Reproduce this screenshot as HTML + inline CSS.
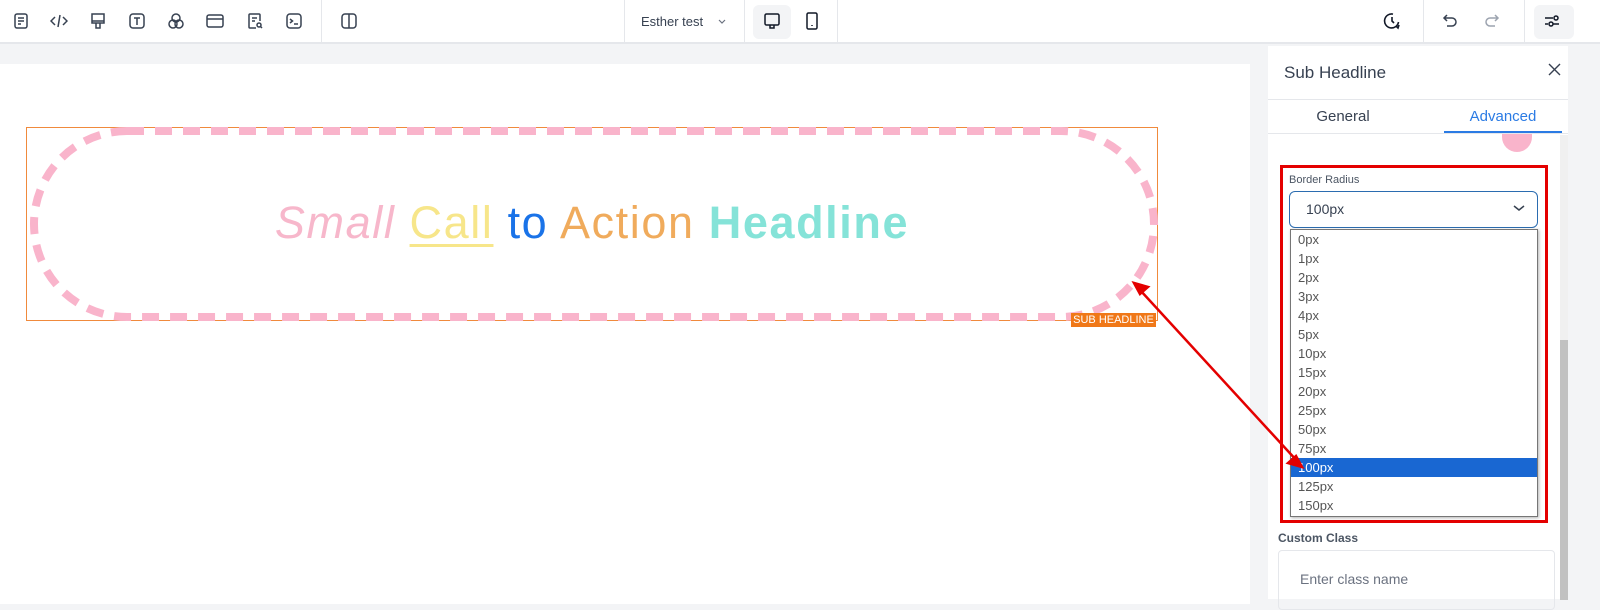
<!DOCTYPE html>
<html><head><meta charset="utf-8"><style>
*{box-sizing:border-box;margin:0;padding:0}
body{width:1600px;height:599px;overflow:hidden;background:#f3f4f6;font-family:"Liberation Sans",sans-serif;position:relative}
.top{position:absolute;left:0;top:0;width:1600px;height:44px;background:#fff;border-bottom:2px solid #e5e7eb}
.ic{position:absolute;top:12px}
.sep{position:absolute;top:0;width:1px;height:44px;background:#e5e7eb}
.page{position:absolute;left:0;top:64px;width:1250px;height:540px;background:#fff}
.panel{position:absolute;left:1268px;top:46px;width:300px;height:553px;background:#fff}
.sb{position:absolute;left:1560px;top:135px;width:8px;height:464px;background:#f0f0f0}
.sb div{position:absolute;left:0;top:205px;width:8px;height:260px;background:#c1c1c1}
.opt{height:19px;line-height:19px;padding-left:7px;font-size:13px;color:#555}
.opt.sel{background:#1967d2;color:#fff}
</style></head><body>
<div class="top">
<svg class="ic" style="left:12px" width="18" height="18" viewBox="0 0 18 18" fill="none" stroke="#374151" stroke-width="1.5"><rect x="3" y="2" width="12" height="14" rx="2"/><path d="M6 6h6M6 9h6M6 12h3"/></svg>
<svg class="ic" style="left:50px" width="18" height="18" viewBox="0 0 18 18" fill="none" stroke="#374151" stroke-width="1.5"><path d="M5 5L1 9l4 4M13 5l4 4-4 4M10 3L8 15"/></svg>
<svg class="ic" style="left:89px" width="18" height="18" viewBox="0 0 18 18" fill="none" stroke="#374151" stroke-width="1.5"><path d="M3 2h12v7H3zM3 9v2h12V9M7 11v5h4v-5"/></svg>
<svg class="ic" style="left:128px" width="18" height="18" viewBox="0 0 18 18" fill="none" stroke="#374151" stroke-width="1.5"><rect x="2" y="2" width="14" height="14" rx="3"/><path d="M6 6h6M9 6v7"/></svg>
<svg class="ic" style="left:167px" width="18" height="18" viewBox="0 0 18 18" fill="none" stroke="#374151" stroke-width="1.5"><circle cx="9" cy="6" r="4"/><circle cx="6" cy="12" r="4"/><circle cx="12" cy="12" r="4"/></svg>
<svg class="ic" style="left:206px" width="18" height="18" viewBox="0 0 18 18" fill="none" stroke="#374151" stroke-width="1.5"><rect x="1" y="3" width="16" height="12" rx="2"/><path d="M1 7h16"/></svg>
<svg class="ic" style="left:246px" width="18" height="18" viewBox="0 0 18 18" fill="none" stroke="#374151" stroke-width="1.5"><path d="M10 16H4a1 1 0 01-1-1V3a1 1 0 011-1h9a1 1 0 011 1v6M6 6h5M6 9h3"/><circle cx="13" cy="13" r="2"/><path d="M14.5 14.5L16 16"/></svg>
<svg class="ic" style="left:285px" width="18" height="18" viewBox="0 0 18 18" fill="none" stroke="#374151" stroke-width="1.5"><rect x="2" y="2" width="14" height="14" rx="3"/><path d="M5 7l2.5 2L5 11M9 12h4"/></svg>
<div class="sep" style="left:321px"></div>
<svg class="ic" style="left:340px" width="18" height="18" viewBox="0 0 18 18" fill="none" stroke="#374151" stroke-width="1.5"><rect x="2" y="2" width="14" height="14" rx="3"/><path d="M9 2v14"/></svg>
<div class="sep" style="left:624px"></div>
<div style="position:absolute;left:641px;top:14px;font-size:13px;color:#374151">Esther test</div>
<svg style="position:absolute;left:717px;top:18px" width="10" height="8" viewBox="0 0 10 8" fill="none" stroke="#6b7280" stroke-width="1.2"><path d="M2 2l3 3 3-3"/></svg>
<div class="sep" style="left:744px"></div>
<div style="position:absolute;left:753px;top:5px;width:38px;height:34px;background:#f3f4f6;border-radius:6px"></div>
<svg class="ic" style="left:763px" width="18" height="18" viewBox="0 0 18 18" fill="none" stroke="#111827" stroke-width="1.5"><rect x="2" y="2" width="14" height="11" rx="1.5"/><path d="M7 13v3h4v-3"/></svg>
<svg class="ic" style="left:803px" width="18" height="18" viewBox="0 0 18 18" fill="none" stroke="#111827" stroke-width="1.5"><rect x="4" y="1" width="10" height="16" rx="1.5"/><path d="M9 13v1"/></svg>
<div class="sep" style="left:837px"></div>
<svg class="ic" style="left:1383px" width="18" height="18" viewBox="0 0 18 18" fill="none" stroke="#111827" stroke-width="1.6"><path d="M15.5 10A7 7 0 1110 2.1"/><path d="M9 5v4l2 2M13 14l2 2 1-3"/></svg>
<div class="sep" style="left:1423px"></div>
<svg class="ic" style="left:1442px" width="18" height="18" viewBox="0 0 18 18" fill="none" stroke="#374151" stroke-width="1.5"><path d="M5 3L2 6l3 3M2 6h8a4 4 0 010 8H5"/></svg>
<svg class="ic" style="left:1482px" width="18" height="18" viewBox="0 0 18 18" fill="none" stroke="#9ca3af" stroke-width="1.5"><path d="M13 3l3 3-3 3M16 6H8a4 4 0 000 8h5"/></svg>
<div class="sep" style="left:1524px"></div>
<div style="position:absolute;left:1534px;top:5px;width:40px;height:34px;background:#f3f4f6;border-radius:6px"></div>
<svg class="ic" style="left:1543px" width="18" height="18" viewBox="0 0 18 18" fill="none" stroke="#111827" stroke-width="1.5"><path d="M2 6h8M2 12h3"/><circle cx="13" cy="6" r="2"/><circle cx="8" cy="12" r="2"/><path d="M10 12h6"/></svg>
</div>
<div class="page"></div>
<div style="position:absolute;left:26px;top:127px;width:1132px;height:194px;border:1px solid #f08a3c"></div>
<svg style="position:absolute;left:0;top:0" width="1600" height="599"><rect x="34" y="131" width="1120" height="186" rx="93" fill="none" stroke="#f9b4cb" stroke-width="8" stroke-dasharray="17 11"/></svg>
<div style="position:absolute;left:26px;top:197px;width:1132px;text-align:center;font-size:45px;letter-spacing:1.6px;white-space:nowrap">
<span style="color:#f7b7cb;font-style:italic">Small</span> <span style="color:#f7e68a;text-decoration:underline;text-decoration-thickness:3px;text-underline-offset:6px">Call</span> <span style="color:#1a73e8">to</span> <span style="color:#f0ab5c">Action</span> <b style="color:#85e3d8">Headline</b></div>
<div style="position:absolute;left:1071px;top:313px;width:85px;height:14px;background:#f07818;color:#fff;font-size:11px;line-height:14px;text-align:center">SUB HEADLINE</div>
<div class="panel">
<div style="position:absolute;left:16px;top:17px;font-size:17px;color:#374151">Sub Headline</div>
<svg style="position:absolute;left:280px;top:17px" width="13" height="13" viewBox="0 0 13 13" stroke="#374151" stroke-width="1.4"><path d="M1 1l11 11M12 1L1 12"/></svg>
<div style="position:absolute;left:0;top:53px;width:300px;height:1px;background:#e5e7eb"></div>
<div style="position:absolute;left:0;top:62px;width:150px;text-align:center;font-size:15px;color:#374151">General</div>
<div style="position:absolute;left:176px;top:62px;width:118px;text-align:center;font-size:15px;color:#2b7be4">Advanced</div>
<div style="position:absolute;left:176px;top:85px;width:118px;height:2px;background:#2b7be4"></div>
<div style="position:absolute;left:0;top:87px;width:300px;height:1px;background:#e5e7eb"></div>
<div style="position:absolute;left:234px;top:88px;width:30px;height:18px;border-radius:0 0 15px 15px;background:#f9b4cb"></div>
<div style="position:absolute;left:10px;top:485px;font-size:12px;color:#4b5563;font-weight:bold">Custom Class</div>
<div style="position:absolute;left:10px;top:504px;width:277px;height:60px;border:1px solid #e5e7eb;border-radius:4px"></div>
<div style="position:absolute;left:32px;top:525px;font-size:14px;color:#6b7280">Enter class name</div>
</div>
<div class="sb"><div></div></div>
<div style="position:absolute;left:1280px;top:165px;width:268px;height:358px;border:3px solid #e40000"></div>
<div style="position:absolute;left:1289px;top:174px;font-size:11px;color:#4b5563">Border Radius</div>
<div style="position:absolute;left:1289px;top:191px;width:249px;height:37px;border:1px solid #2b6cb0;border-radius:6px;font-size:14px;color:#374151;line-height:35px;padding-left:16px">100px</div>
<svg style="position:absolute;left:1512px;top:203px" width="14" height="10" viewBox="0 0 14 10" fill="none" stroke="#374151" stroke-width="1.5"><path d="M2 3l5 4 5-4"/></svg>
<div style="position:absolute;left:1290px;top:229px;width:248px;height:288px;background:#fff;border:1px solid #767676;padding-top:0;box-shadow:1px 1px 3px rgba(0,0,0,.3)">
<div class="opt">0px</div><div class="opt">1px</div><div class="opt">2px</div><div class="opt">3px</div><div class="opt">4px</div><div class="opt">5px</div><div class="opt">10px</div><div class="opt">15px</div><div class="opt">20px</div><div class="opt">25px</div><div class="opt">50px</div><div class="opt">75px</div><div class="opt sel">100px</div><div class="opt">125px</div><div class="opt">150px</div>
</div>
<svg style="position:absolute;left:0;top:0" width="1600" height="599"><g stroke="#e40000" stroke-width="2.5" fill="#e40000"><line x1="1140" y1="290" x2="1298" y2="462"/><path d="M1134 283l14 4-8 7z"/><path d="M1302 467l-14-4 8-7z"/></g></svg>
</body></html>
